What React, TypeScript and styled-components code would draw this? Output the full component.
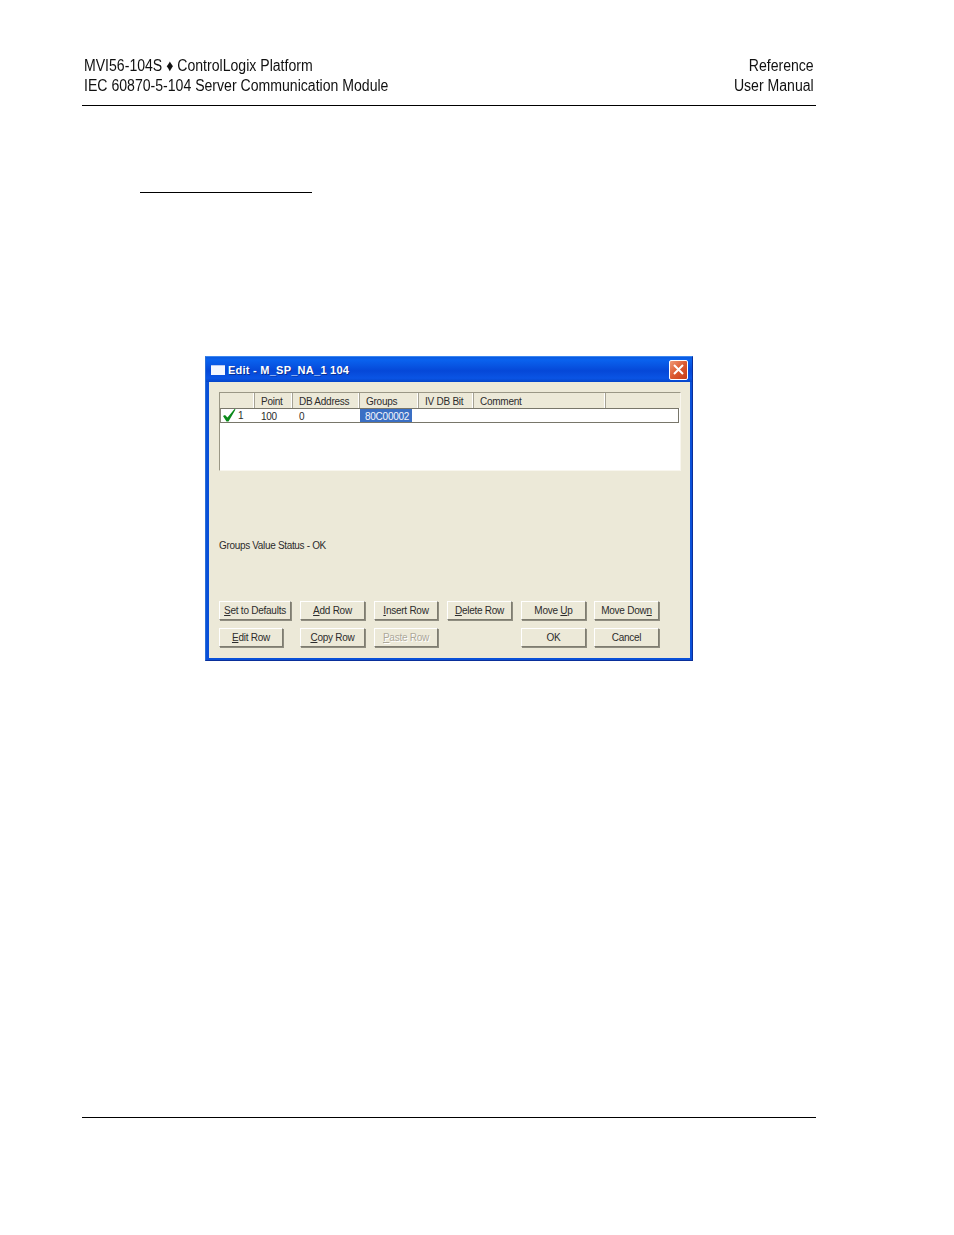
import React from "react";
import styled, { createGlobalStyle } from "styled-components";

const Global = createGlobalStyle`
  html, body { margin: 0; padding: 0; background: #fff; }
  body { font-family: "Liberation Sans", Arial, sans-serif; }
`;

const Page = styled.div`
  width: 954px;
  height: 1235px;
  box-sizing: border-box;
  padding: 56px 138px 0 82px;
  display: flex;
  flex-direction: column;
`;

const Header = styled.header`
  height: 50px;
  box-sizing: border-box;
  padding: 0 2px;
  border-bottom: 1px solid #000;
  display: flex;
  justify-content: space-between;
  color: #111;
`;

const HeaderBlock = styled.div<{ $right?: boolean }>`
  font-size: 16px;
  line-height: 20px;
  white-space: nowrap;
  transform: scaleX(0.88);
  transform-origin: ${(p) => (p.$right ? "right" : "left")} center;
  text-align: ${(p) => (p.$right ? "right" : "left")};
`;

const ShortRule = styled.div`
  width: 172px;
  height: 1px;
  margin: 86px 0 0 58px;
  background: #000;
`;

const Dialog = styled.section`
  width: 488px;
  height: 305px;
  margin: 163px 0 0 123px;
  box-sizing: border-box;
  display: flex;
  flex-direction: column;
  background: #0a50d8;
  border: 1px solid #2a6fd6;
  border-top-color: #3c86f0;
  border-bottom-color: #0a2f9a;
  border-right-color: #0a2f9a;
`;

const TitleBar = styled.div`
  height: 25px;
  flex: none;
  display: flex;
  align-items: center;
  padding: 0 4px 0 5px;
  background: linear-gradient(180deg, #0a5ae0 0%, #0a62ee 12%, #0548d8 55%, #0a54e4 85%, #0444c8 100%);
`;

const TitleText = styled.span`
  margin-left: 3px;
  flex: 1;
  color: #fff;
  font-size: 11px;
  font-weight: 700;
  letter-spacing: 0.25px;
  text-shadow: 1px 1px 0 #0a2f90;
`;

const CloseButton = styled.div`
  width: 17px;
  height: 18px;
  display: flex;
  align-items: center;
  justify-content: center;
  border: 1px solid #fff;
  border-radius: 2px;
  background: linear-gradient(135deg, #f09a78 0%, #dc5a30 50%, #c43c18 100%);
`;

const Client = styled.div`
  flex: 1;
  margin: 0 2px 2px 3px;
  padding: 10px 9px 11px 10px;
  background: #ece9d8;
  display: flex;
  flex-direction: column;
  min-height: 0;
  font-size: 10px;
  letter-spacing: -0.25px;
  color: #2c2c2c;
`;

const Table = styled.div`
  height: 79px;
  flex: none;
  box-sizing: border-box;
  background: #fff;
  border: 1px solid;
  border-color: #9a9786 #f8f6ee #f8f6ee #9a9786;
`;

const HeadRow = styled.div`
  height: 15px;
  display: flex;
  background: #ece9d8;
`;

const HeadCell = styled.div<{ $w: number }>`
  width: ${(p) => p.$w}px;
  flex: none;
  box-sizing: border-box;
  padding: 2px 0 0 6px;
  line-height: 13px;
  border-right: 1px solid #a5a294;
  box-shadow: inset -1px 0 0 #fff;
`;

const DataRow = styled.div`
  height: 15px;
  box-sizing: border-box;
  margin-right: 1px;
  display: flex;
  align-items: stretch;
  border: 1px solid #78766a;
  border-left-color: #8a8878;
  background: #fff;
`;

const DataCell = styled.div<{ $w: number }>`
  width: ${(p) => p.$w}px;
  flex: none;
  box-sizing: border-box;
  padding-left: 7px;
  line-height: 15px;
`;

const CheckCell = styled.div`
  width: 33px;
  flex: none;
  display: flex;
  align-items: center;
  padding-left: 1px;
  box-sizing: border-box;
  line-height: 15px;
  gap: 2px;
`;

const SelectedCell = styled.div`
  width: 52px;
  flex: none;
  box-sizing: border-box;
  padding-left: 5px;
  line-height: 15px;
  margin-left: 1px;
  background: #3a6fc4;
  color: #f4f6fb;
`;

const Status = styled.div`
  margin-top: 68px;
  line-height: 13px;
  letter-spacing: -0.33px;
`;

const Buttons = styled.div`
  margin-top: auto;
  display: flex;
  flex-direction: column;
  gap: 8px;
`;

const ButtonRow = styled.div`
  display: flex;
  gap: 8px;
`;

const Button = styled.div<{ $w: number; $after?: number; $disabled?: boolean }>`
  width: ${(p) => p.$w - 1}px;
  height: 19px;
  margin-right: ${(p) => (p.$after ?? 0) + 1}px;
  box-sizing: border-box;
  display: flex;
  align-items: center;
  justify-content: center;
  background: #ece9d8;
  border: 1px solid;
  border-color: #fff #7e7c70 #7e7c70 #fff;
  box-shadow: 1px 1px 0 #8f8d80;
  color: ${(p) => (p.$disabled ? "#aca899" : "#2c2c2c")};
  text-shadow: ${(p) => (p.$disabled ? "1px 1px 0 #fff" : "none")};
  u { text-underline-offset: 1px; }
`;

const Spacer = styled.div<{ $w: number }>`
  width: ${(p) => p.$w}px;
  flex: none;
`;

const BottomRule = styled.div`
  height: 1px;
  margin-top: 456px;
  background: #000;
`;

const Check = () => (
  <svg width="14" height="13" viewBox="0 0 14 13">
    <path d="M1 7 L3 6 L5.5 8.5 L12.5 0 L13.5 .5 L6.5 12.5 L4.5 12.5 Z" fill="#0a8a1a" />
  </svg>
);

const WindowIcon = () => (
  <svg width="14" height="10" viewBox="0 0 14 10">
    <rect width="14" height="10" fill="#f4f6ff" />
    <rect x="0" y="0" width="14" height="1" fill="#b8c8f0" />
  </svg>
);

const CloseX = () => (
  <svg width="11" height="11" viewBox="0 0 11 11">
    <path d="M1 1 L10 10 M10 1 L1 10" stroke="#fff" strokeWidth="2" />
  </svg>
);

const columns: [string, number][] = [
  ["Point", 38],
  ["DB Address", 67],
  ["Groups", 59],
  ["IV DB Bit", 55],
  ["Comment", 132],
];

export default function App() {
  return (
    <Page>
      <Global />
      <Header>
        <HeaderBlock>
          MVI56-104S ♦ ControlLogix Platform
          <br />
          IEC 60870-5-104 Server Communication Module
        </HeaderBlock>
        <HeaderBlock $right>
          Reference
          <br />
          User Manual
        </HeaderBlock>
      </Header>
      <ShortRule />
      <Dialog>
        <TitleBar>
          <WindowIcon />
          <TitleText>Edit - M_SP_NA_1 104</TitleText>
          <CloseButton>
            <CloseX />
          </CloseButton>
        </TitleBar>
        <Client>
          <Table>
            <HeadRow>
              <HeadCell $w={35} />
              {columns.map(([label, w]) => (
                <HeadCell key={label} $w={w}>
                  {label}
                </HeadCell>
              ))}
            </HeadRow>
            <DataRow>
              <CheckCell>
                <Check />1
              </CheckCell>
              <DataCell $w={38}>100</DataCell>
              <DataCell $w={67}>0</DataCell>
              <SelectedCell>80C00002</SelectedCell>
            </DataRow>
          </Table>
          <Status>Groups Value Status - OK</Status>
          <Buttons>
            <ButtonRow>
              <Button $w={73}><span><u>S</u>et to Defaults</span></Button>
              <Button $w={66}><span><u>A</u>dd Row</span></Button>
              <Button $w={65}><span><u>I</u>nsert Row</span></Button>
              <Button $w={66}><span><u>D</u>elete Row</span></Button>
              <Button $w={66} $after={-1}><span>Move <u>U</u>p</span></Button>
              <Button $w={66}><span>Move Dow<u>n</u></span></Button>
            </ButtonRow>
            <ButtonRow>
              <Button $w={65} $after={8}><span><u>E</u>dit Row</span></Button>
              <Button $w={66}><span><u>C</u>opy Row</span></Button>
              <Button $w={65} $disabled><span><u>P</u>aste Row</span></Button>
              <Spacer $w={66} />
              <Button $w={66} $after={-1}>OK</Button>
              <Button $w={66}>Cancel</Button>
            </ButtonRow>
          </Buttons>
        </Client>
      </Dialog>
      <BottomRule />
    </Page>
  );
}
